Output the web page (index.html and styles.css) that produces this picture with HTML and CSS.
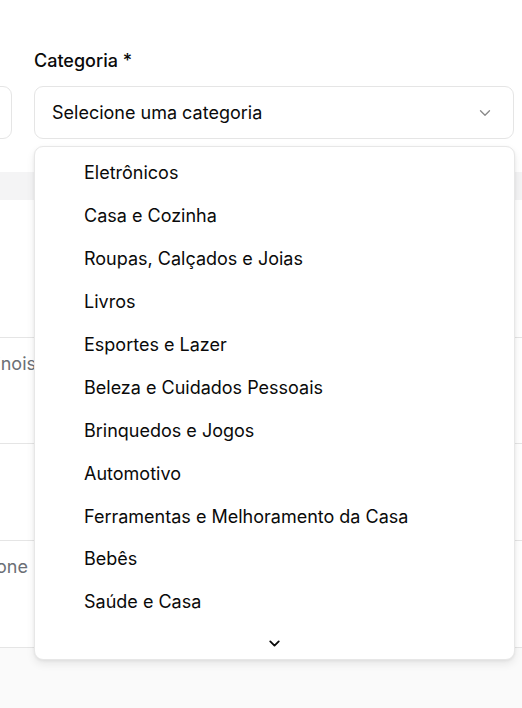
FILE: index.html
```
<!DOCTYPE html>
<html lang="pt">
<head>
<meta charset="utf-8">
<link rel="stylesheet" href="styles.css">
</head>
<body>
<div class="page">
  <div class="form-row">
    <div class="field field-left">
      <label class="label">Nome *</label>
      <div class="input"></div>
    </div>
    <div class="field field-right">
      <label class="label">Categoria *</label>
      <div class="select-wrap">
        <div class="select">
          <span>Selecione uma categoria</span>
          <svg class="chev" width="18" height="18" viewBox="0 0 24 24" fill="none" stroke="currentColor" stroke-width="1.8" stroke-linecap="round" stroke-linejoin="round"><path d="m6 9 6 6 6-6"/></svg>
        </div>
        <div class="menu">
          <ul class="items">
            <li>Eletrônicos</li>
            <li>Casa e Cozinha</li>
            <li>Roupas, Calçados e Joias</li>
            <li>Livros</li>
            <li>Esportes e Lazer</li>
            <li>Beleza e Cuidados Pessoais</li>
            <li>Brinquedos e Jogos</li>
            <li>Automotivo</li>
            <li>Ferramentas e Melhoramento da Casa</li>
            <li>Bebês</li>
            <li>Saúde e Casa</li>
          </ul>
          <div class="scroll-down">
            <svg width="17" height="17" viewBox="0 0 24 24" fill="none" stroke="currentColor" stroke-width="2.6" stroke-linecap="round" stroke-linejoin="round"><path d="m6 9 6 6 6-6"/></svg>
          </div>
        </div>
      </div>
    </div>
  </div>
  <div class="table">
    <div class="thead"></div>
    <div class="row r1"></div>
    <div class="row r2"><span class="cell">Tecidos chinois</span></div>
    <div class="row r3"></div>
    <div class="row r4"><span class="cell">Telefone</span></div>
  </div>
</div>
</body>
</html>
```
FILE: styles.css
```
* { box-sizing: border-box; }
html, body { margin: 0; padding: 0; }
body {
  background: #fafafa;
  font-family: Inter, "Noto Sans", sans-serif;
  color: #0a0a0a;
  width: 522px;
  height: 708px;
  overflow: hidden;
}
.page {
  background: #fff;
  padding-top: 49px;
}
.form-row {
  display: grid;
  grid-template-columns: 480px 480px;
  column-gap: 22px;
  margin-left: -468px;
}
.label {
  display: block;
  font-size: 18px;
  font-weight: 500;
  line-height: 24px;
  margin-bottom: 13px;
}
.field-left .label { visibility: hidden; }
.input {
  height: 53px;
  border: 1px solid #e5e5e5;
  border-radius: 9px;
}
.select-wrap { position: relative; }
.select {
  height: 53px;
  border: 1px solid #e5e5e5;
  border-radius: 9px;
  display: flex;
  align-items: center;
  justify-content: space-between;
  padding: 0 19px 0 17px;
  font-size: 18px;
}
.chev { color: #8a8a8a; }
.menu {
  position: absolute;
  top: 60px;
  left: 0;
  width: 481px;
  height: 514px;
  background: #fff;
  border: 1px solid #e7e7e7;
  border-radius: 9px;
  box-shadow: 0 4px 8px rgba(0,0,0,0.08), 0 1px 3px rgba(0,0,0,0.06);
  padding: 5px 4px 4px;
  z-index: 10;
  display: flex;
  flex-direction: column;
}
.items {
  list-style: none;
  margin: 0;
  padding: 0;
}
.items li {
  height: 42.9px;
  display: flex;
  align-items: center;
  padding-left: 45px;
  font-size: 18px;
  line-height: 24px;
}
.scroll-down {
  flex: 1;
  display: flex;
  justify-content: center;
  align-items: center;
  color: #0a0a0a;
  padding-top: 8px;
}
.table { margin-top: 33px; }
.thead { height: 28px; background: #f4f4f5; }
.row {
  border-bottom: 1px solid #e5e5e5;
  position: relative;
  overflow: hidden;
}
.r1 { height: 138px; }
.r2 { height: 106px; }
.r3 { height: 97px; }
.r4 { height: 107px; }
.cell {
  position: absolute;
  top: 14px;
  font-size: 18px;
  line-height: 24px;
  color: #6b6f76;
  white-space: nowrap;
}
.r2 .cell { right: 486px; }
.r4 .cell { right: 494px; }
```
